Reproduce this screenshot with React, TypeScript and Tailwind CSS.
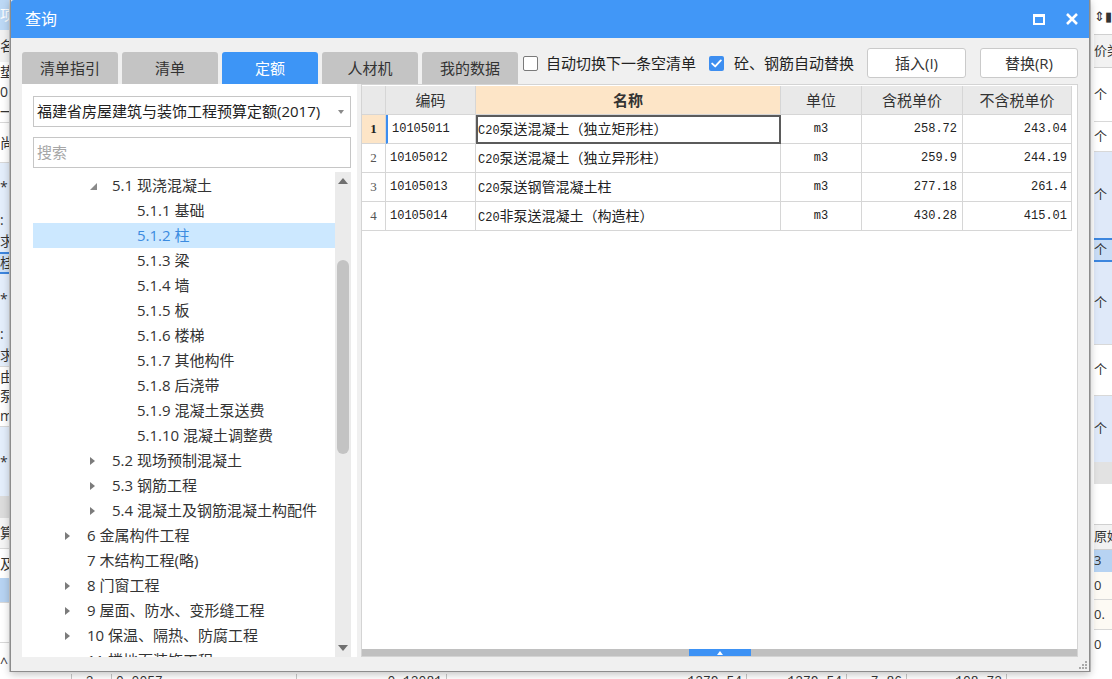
import React from 'react';

type TreeNode = { lvl: 1 | 2 | 3; text: string; arrow?: 'open' | 'closed'; sel?: boolean };

const TREE: TreeNode[] = [
  { lvl: 2, text: '5.1 现浇混凝土', arrow: 'open' },
  { lvl: 3, text: '5.1.1 基础' },
  { lvl: 3, text: '5.1.2 柱', sel: true },
  { lvl: 3, text: '5.1.3 梁' },
  { lvl: 3, text: '5.1.4 墙' },
  { lvl: 3, text: '5.1.5 板' },
  { lvl: 3, text: '5.1.6 楼梯' },
  { lvl: 3, text: '5.1.7 其他构件' },
  { lvl: 3, text: '5.1.8 后浇带' },
  { lvl: 3, text: '5.1.9 混凝土泵送费' },
  { lvl: 3, text: '5.1.10 混凝土调整费' },
  { lvl: 2, text: '5.2 现场预制混凝土', arrow: 'closed' },
  { lvl: 2, text: '5.3 钢筋工程', arrow: 'closed' },
  { lvl: 2, text: '5.4 混凝土及钢筋混凝土构配件', arrow: 'closed' },
  { lvl: 1, text: '6 金属构件工程', arrow: 'closed' },
  { lvl: 1, text: '7 木结构工程(略)' },
  { lvl: 1, text: '8 门窗工程', arrow: 'closed' },
  { lvl: 1, text: '9 屋面、防水、变形缝工程', arrow: 'closed' },
  { lvl: 1, text: '10 保温、隔热、防腐工程', arrow: 'closed' },
  { lvl: 1, text: '11 楼地面装饰工程', arrow: 'closed' },
];

const INDENT = { 1: 'pl-[27px]', 2: 'pl-[52px]', 3: 'pl-[77px]' };

const ROWS = [
  { code: '10105011', name: '泵送混凝土（独立矩形柱）', unit: 'm3', tax: '258.72', net: '243.04' },
  { code: '10105012', name: '泵送混凝土（独立异形柱）', unit: 'm3', tax: '259.9', net: '244.19' },
  { code: '10105013', name: '泵送钢管混凝土柱', unit: 'm3', tax: '277.18', net: '261.4' },
  { code: '10105014', name: '非泵送混凝土（构造柱）', unit: 'm3', tax: '430.28', net: '415.01' },
];

const TABS = ['清单指引', '清单', '定额', '人材机', '我的数据'];

const MONO = "font-['Liberation_Mono','Noto_Sans_CJK_SC',monospace]";

function Backdrop() {
  // the main window behind the dialog: only thin strips show at the edges
  const left: [string, string][] = [
    ['h-[30px] bg-[#bcd8f5] text-white', '项'],
    ['h-[32px] bg-[#f2f2f2]', '名'],
    ['h-[20px] bg-white', '垫'],
    ['h-[20px] bg-white', '0'],
    ['h-[20px] bg-white', '一'],
    ['h-[40px] bg-white border-t border-[#d8d8d8]', '尚'],
    ['h-[48px] bg-[#e4eefb] border-t border-[#d8d8d8]', '*'],
    ['h-[20px] bg-[#e4eefb]', ':'],
    ['h-[22px] bg-[#e4eefb]', '求'],
    ['h-[22px] bg-[#cfe2f8] border-y-2 border-[#3d86de]', '桂'],
    ['h-[50px] bg-[#e4eefb]', '*'],
    ['h-[20px] bg-[#e4eefb]', ':'],
    ['h-[22px] bg-[#e4eefb]', '求'],
    ['h-[20px] bg-white border-t border-[#d8d8d8]', '由'],
    ['h-[20px] bg-white', '泵'],
    ['h-[20px] bg-white', 'm'],
    ['h-[70px] bg-[#e4eefb] border-t border-[#d8d8d8]', '*'],
    ['h-[22px] bg-[#dcdcdc]', ''],
    ['h-[30px] bg-[#f5f5f5]', '算'],
    ['h-[30px] bg-white border-t border-[#d8d8d8]', '及'],
    ['h-[24px] bg-[#b7d3f2]', ''],
    ['h-[40px] bg-white border-t border-[#d8d8d8]', ''],
    ['h-[40px] bg-white border-t border-[#d8d8d8]', '^'],
  ];
  const right: [string, string][] = [
    ['h-[34px] bg-white', '⇕▮'],
    ['h-[34px] bg-[#f2f2f2] border-y border-[#d0d0d0]', '价类'],
    ['h-[54px] bg-white border-b border-[#d8d8d8]', '个'],
    ['h-[30px] bg-white border-b border-[#d8d8d8]', '个'],
    ['h-[86px] bg-[#dfe9f9]', '个'],
    ['h-[24px] bg-[#c9ddf6] border-y-2 border-[#3d86de]', '个'],
    ['h-[82px] bg-[#dfe9f9]', '个'],
    ['h-[52px] bg-white border-y border-[#d8d8d8]', '个'],
    ['h-[66px] bg-[#dfe9f9]', '个'],
    ['h-[22px] bg-[#e2e2e2]', ''],
    ['h-[40px] bg-white', ''],
    ['h-[26px] bg-[#f2f2f2] border-y border-[#d0d0d0]', '原始'],
    ['h-[22px] bg-[#b7d3f2]', '3'],
    ['h-[28px] bg-[#fdfaf4] border-b border-[#d8d8d8]', '0'],
    ['h-[30px] bg-[#fdfaf4] border-b border-[#d8d8d8]', '0.'],
    ['h-[30px] bg-white', '0'],
  ];
  return (
    <div className="flex flex-col w-full h-full">
      <div className="flex h-[672px]">
        <div className="w-[10px] flex flex-col overflow-hidden border-r border-[#d0d0d0]">
          {left.map(([cls, t], i) => (
            <div key={i} className={`${cls} shrink-0 flex items-center text-[14px] leading-[16px] whitespace-nowrap overflow-hidden`}>
              {t}
            </div>
          ))}
        </div>
        <div className="flex-1 bg-white" />
        <div className="w-[22px] flex flex-col overflow-hidden border-l border-[#c8c8c8] pl-[3px]">
          {right.map(([cls, t], i) => (
            <div key={i} className={`${cls} shrink-0 flex items-center text-[13px] text-[#333] whitespace-nowrap overflow-hidden`}>
              {t}
            </div>
          ))}
        </div>
      </div>
      <div className={`flex h-[7px] bg-white text-[13px] text-[#333] ${MONO} leading-[16px] pt-[2px]`}>
        <div className="w-[72px] border-r border-[#c8c8c8]" />
        <div className="w-[40px] pl-[6px] border-r border-[#c8c8c8]">-3</div>
        <div className="w-[185px] pl-[4px] border-r border-[#c8c8c8]">0.0057</div>
        <div className="w-[150px] text-right pr-[4px] border-r border-[#c8c8c8]">0.13081</div>
        <div className="w-[300px] text-right pr-[4px] border-r border-[#c8c8c8]">1379.54</div>
        <div className="w-[100px] text-right pr-[4px] border-r border-[#c8c8c8]">1379.54</div>
        <div className="w-[60px] text-right pr-[4px] border-r border-[#c8c8c8]">7.86</div>
        <div className="w-[100px] text-right pr-[4px] border-r border-[#c8c8c8]">108.73</div>
        <div className="flex-1" />
      </div>
    </div>
  );
}

function Arrow({ kind }: { kind?: 'open' | 'closed' }) {
  if (kind === 'closed')
    return <span className="ml-[5px] block w-0 h-0 border-y-[4px] border-y-transparent border-l-[5px] border-l-[#7b7b7b]" />;
  if (kind === 'open')
    return (
      <svg width="7" height="7" viewBox="0 0 7 7" className="ml-[5px] mt-[2px]">
        <polygon points="7,0 7,7 0,7" fill="#8a8a8a" />
      </svg>
    );
  return null;
}

function Tree() {
  return (
    <div className="flex flex-1 min-h-0 mt-[4px]">
      <div className="flex-1 overflow-hidden pt-[1px]">
        {TREE.map((n, i) => (
          <div
            key={i}
            className={`h-[25px] flex items-center ${INDENT[n.lvl]} ${n.sel ? 'bg-[#cce8ff] text-[#3b8be0]' : 'text-[#333]'}`}
          >
            <div className="w-[27px] flex items-center shrink-0">
              <Arrow kind={n.arrow} />
            </div>
            <span className="text-[15px] whitespace-nowrap">{n.text}</span>
          </div>
        ))}
      </div>
      <div className="w-[16px] bg-[#ebebeb] flex flex-col items-center">
        <svg width="10" height="6" viewBox="0 0 10 6" className="mt-[6px]">
          <polygon points="5,0 10,6 0,6" fill="#6f6f6f" />
        </svg>
        <div className="w-[12px] h-[194px] mt-[76px] rounded-full bg-[#c3c3c3]" />
        <div className="flex-1" />
        <svg width="10" height="6" viewBox="0 0 10 6" className="mb-[6px]">
          <polygon points="0,0 10,0 5,6" fill="#6f6f6f" />
        </svg>
      </div>
    </div>
  );
}

function LeftPanel() {
  return (
    <div className="w-[335px] bg-white flex flex-col pl-[11px] pr-[6px] pt-[12px]">
      <div className="h-[31px] border border-[#c6c6c6] flex items-center pl-[3px] pr-[6px]">
        <span className="flex-1 text-[15px] text-[#222] whitespace-nowrap">福建省房屋建筑与装饰工程预算定额(2017)</span>
        <span className="w-0 h-0 border-x-[3px] border-x-transparent border-t-[4px] border-t-[#8a8a8a]" />
      </div>
      <div className="h-[31px] mt-[10px] border border-[#c6c6c6] flex items-center pl-[3px]">
        <span className="text-[15px] text-[#a6a6a6]">搜索</span>
      </div>
      <Tree />
    </div>
  );
}

function Table() {
  const cell = 'border-r border-b border-[#d6d6d6] flex items-center';
  return (
    <div className="grid grid-cols-[24px_90px_305px_81px_101px_109px] auto-rows-[29px] w-[710px]">
      <div className={`${cell} bg-[#e9e9e9]`} />
      <div className={`${cell} bg-[#e9e9e9] justify-center text-[15px] text-[#333]`}>编码</div>
      <div className={`${cell} bg-[#fde5c7] justify-center text-[15px] font-bold text-[#333]`}>名称</div>
      <div className={`${cell} bg-[#e9e9e9] justify-center text-[15px] text-[#333]`}>单位</div>
      <div className={`${cell} bg-[#e9e9e9] justify-center text-[15px] text-[#333]`}>含税单价</div>
      <div className={`${cell} bg-[#e9e9e9] justify-center text-[15px] text-[#333]`}>不含税单价</div>
      {ROWS.map((r, i) => {
        const first = i === 0;
        return (
          <React.Fragment key={r.code}>
            <div
              className={`${cell} justify-center font-['Liberation_Serif',serif] text-[13px] ${first ? 'bg-[#fde5c7] font-bold text-[#222]' : 'text-[#555]'}`}
            >
              {i + 1}
            </div>
            <div className={`${cell} pl-[4px] ${MONO} text-[12px] text-[#222] ${first ? 'border-l-2 border-l-[#3d8ef0] pl-[2px]' : ''}`}>
              {r.code}
            </div>
            <div
              className={`${cell} pl-[2px] text-[14px] text-[#222] whitespace-nowrap ${first ? 'outline-2 -outline-offset-2 outline-[#5b5b5b]' : ''}`}
            >
              <span className="leading-[20px]">
                <span className={`${MONO} text-[12px]`}>C20</span>
                <span className="font-['Noto_Sans_CJK_SC',sans-serif]">{r.name}</span>
              </span>
            </div>
            <div className={`${cell} justify-center ${MONO} text-[12px] text-[#222]`}>{r.unit}</div>
            <div className={`${cell} justify-end pr-[5px] ${MONO} text-[12px] text-[#222]`}>{r.tax}</div>
            <div className={`${cell} justify-end pr-[4px] ${MONO} text-[12px] text-[#222]`}>{r.net}</div>
          </React.Fragment>
        );
      })}
    </div>
  );
}

function RightPanel() {
  return (
    <div className="ml-[4px] w-[717px] bg-white border border-[#d4d4d4] flex flex-col pt-[1px]">
      <Table />
      <div className="flex-1" />
      <div className="h-[7px] bg-[#c0c0c0] flex justify-center">
        <div className="w-[62px] h-full bg-[#3d92f5] flex items-center justify-center">
          <span className="w-0 h-0 border-x-[3px] border-x-transparent border-b-[4px] border-b-white" />
        </div>
      </div>
    </div>
  );
}

function Checkbox({ checked }: { checked?: boolean }) {
  if (checked)
    return (
      <span className="w-[15px] h-[15px] rounded-[2px] bg-[#3d8ef0] flex items-center justify-center">
        <svg width="11" height="9" viewBox="0 0 11 9">
          <path d="M1.2 4.6 L4.2 7.4 L9.8 1.4" stroke="white" strokeWidth="1.9" fill="none" strokeLinecap="round" strokeLinejoin="round" />
        </svg>
      </span>
    );
  return <span className="w-[15px] h-[15px] rounded-[2px] bg-white border border-[#7a7a7a]" />;
}

export default function App() {
  return (
    <div className="relative w-[1112px] h-[679px] overflow-hidden bg-white font-['Open_Sans','Noto_Sans_CJK_SC',sans-serif] text-[#333]">
      <Backdrop />
      <div className="absolute left-[10px] top-0 w-[1080px] h-[672px] bg-[#f0f0f0] border-x border-b border-[#8c8c8c] shadow-[0_2px_8px_rgba(0,0,0,0.25)] flex flex-col">
        {/* title bar */}
        <div className="h-[38px] bg-[#4197f7] rounded-tl-[3px] flex items-center pl-[14px] pr-[10px]">
          <span className="text-[16px] text-white flex-1">查询</span>
          <svg width="12" height="11" viewBox="0 0 12 11" className="mr-[21px]">
            <rect x="1" y="1.5" width="10" height="8.5" stroke="white" strokeWidth="2" fill="none" />
            <rect x="0" y="0" width="12" height="3" fill="white" />
          </svg>
          <svg width="12" height="12" viewBox="0 0 12 12" className="mr-[1px]">
            <path d="M1 1 L11 11 M11 1 L1 11" stroke="white" strokeWidth="2.6" />
          </svg>
        </div>

        <div className="flex-1 flex flex-col px-[11px]">
          {/* toolbar row */}
          <div className="h-[46px] flex items-start">
            <div className="flex gap-[4px] mt-[14px]">
              {TABS.map((t, i) => (
                <div
                  key={t}
                  className={`w-[96px] h-[32px] rounded-t-[3px] flex items-center justify-center text-[15px] ${i === 2 ? 'bg-[#3d95f6] text-white' : 'bg-[#c4c4c4] text-[#333]'}`}
                >
                  {t}
                </div>
              ))}
            </div>
            <div className="h-[30px] mt-[10px] ml-[5px] flex items-center">
              <Checkbox />
              <span className="ml-[8px] text-[15px] text-[#222]">自动切换下一条空清单</span>
              <span className="ml-[13px]" />
              <Checkbox checked />
              <span className="ml-[10px] text-[15px] text-[#222]">砼、钢筋自动替换</span>
            </div>
            <div className="ml-auto mt-[10px] flex gap-[14px]">
              <button className="w-[99px] h-[30px] bg-white border border-[#cacaca] rounded-[3px] text-[15px] text-[#333]">插入(I)</button>
              <button className="w-[98px] h-[30px] bg-white border border-[#cacaca] rounded-[3px] text-[15px] text-[#333]">替换(R)</button>
            </div>
          </div>

          {/* content */}
          <div className="h-[573px] flex">
            <LeftPanel />
            <RightPanel />
          </div>

          <div className="flex-1 flex justify-end items-end pb-[2px] -mr-[9px]">
            <svg width="9" height="9" viewBox="0 0 9 9">
              <g fill="#a8a8a8">
                <rect x="7" y="1" width="2" height="2" />
                <rect x="4" y="4" width="2" height="2" />
                <rect x="7" y="4" width="2" height="2" />
                <rect x="1" y="7" width="2" height="2" />
                <rect x="4" y="7" width="2" height="2" />
                <rect x="7" y="7" width="2" height="2" />
              </g>
            </svg>
          </div>
        </div>
      </div>
    </div>
  );
}
